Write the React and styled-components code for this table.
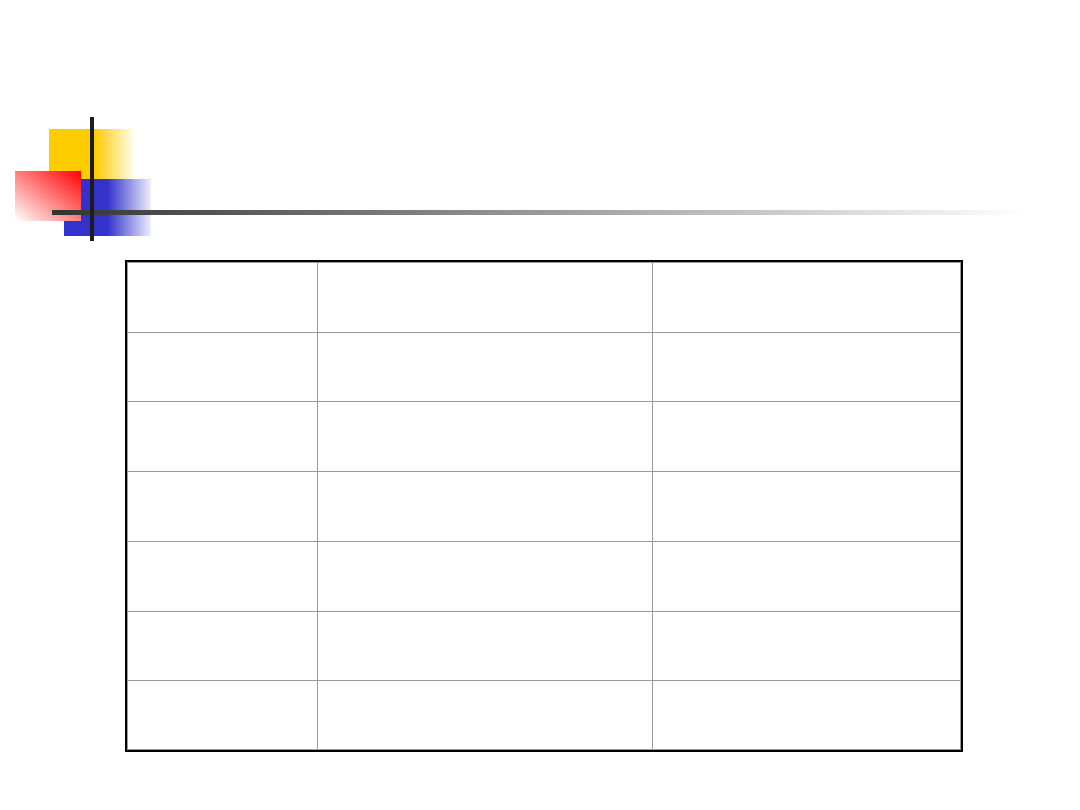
import React from "react";
import styled, { createGlobalStyle } from "styled-components";

const GlobalStyle = createGlobalStyle`
  html, body {
    margin: 0;
    padding: 0;
    background: #ffffff;
  }
`;

const Page = styled.div`
  width: 1080px;
  height: 810px;
  background: #ffffff;
  overflow: hidden;
  font-family: "Liberation Sans", Arial, sans-serif;
`;

const Header = styled.div`
  height: 260px;
`;

const Decoration = styled.svg`
  display: block;
`;

const Frame = styled.div`
  margin-left: 125px;
  width: 834px;
  border: 2px solid #000000;
`;

const Inner = styled.div`
  padding: 1px;
  background: #9a9a9a;
`;

const Grid = styled.div`
  display: grid;
  grid-template-columns: 189px 334px 307px;
  grid-template-rows: 69px 68px 69px 69px 69px 68px 68px;
  gap: 1px;
`;

const Cell = styled.div`
  background: #ffffff;
`;

const rows = 7;
const cols = 3;

function Logo() {
  return (
    <Decoration width="1080" height="260" viewBox="0 0 1080 260">
      <defs>
        <linearGradient id="yel" x1="0" y1="0" x2="1" y2="0">
          <stop offset="0" stopColor="#ffcc00" />
          <stop offset="0.54" stopColor="#ffcc00" />
          <stop offset="1" stopColor="#fffbe8" />
        </linearGradient>
        <linearGradient id="blu" x1="0" y1="0" x2="1" y2="0">
          <stop offset="0" stopColor="#3333cc" />
          <stop offset="0.5" stopColor="#3333cc" />
          <stop offset="1" stopColor="#eeeefc" />
        </linearGradient>
        <linearGradient id="red" x1="1" y1="0" x2="0" y2="1">
          <stop offset="0" stopColor="#ff0000" />
          <stop offset="1" stopColor="#ffffff" />
        </linearGradient>
        <linearGradient id="bar" x1="0" y1="0" x2="1" y2="0">
          <stop offset="0" stopColor="#333333" />
          <stop offset="1" stopColor="#ffffff" />
        </linearGradient>
      </defs>
      <rect x="49" y="129" width="84" height="50" fill="url(#yel)" />
      <rect x="64" y="179" width="87" height="57" fill="url(#blu)" />
      <rect x="15" y="171" width="66" height="50" fill="url(#red)" />
      <rect x="52" y="210" width="975" height="5" fill="url(#bar)" />
      <rect x="90" y="117" width="4" height="124" fill="#1c1c1c" />
    </Decoration>
  );
}

export default function App() {
  return (
    <Page>
      <GlobalStyle />
      <Header>
        <Logo />
      </Header>
      <Frame>
        <Inner>
          <Grid>
            {Array.from({ length: rows * cols }).map((_, i) => (
              <Cell key={i} />
            ))}
          </Grid>
        </Inner>
      </Frame>
    </Page>
  );
}
